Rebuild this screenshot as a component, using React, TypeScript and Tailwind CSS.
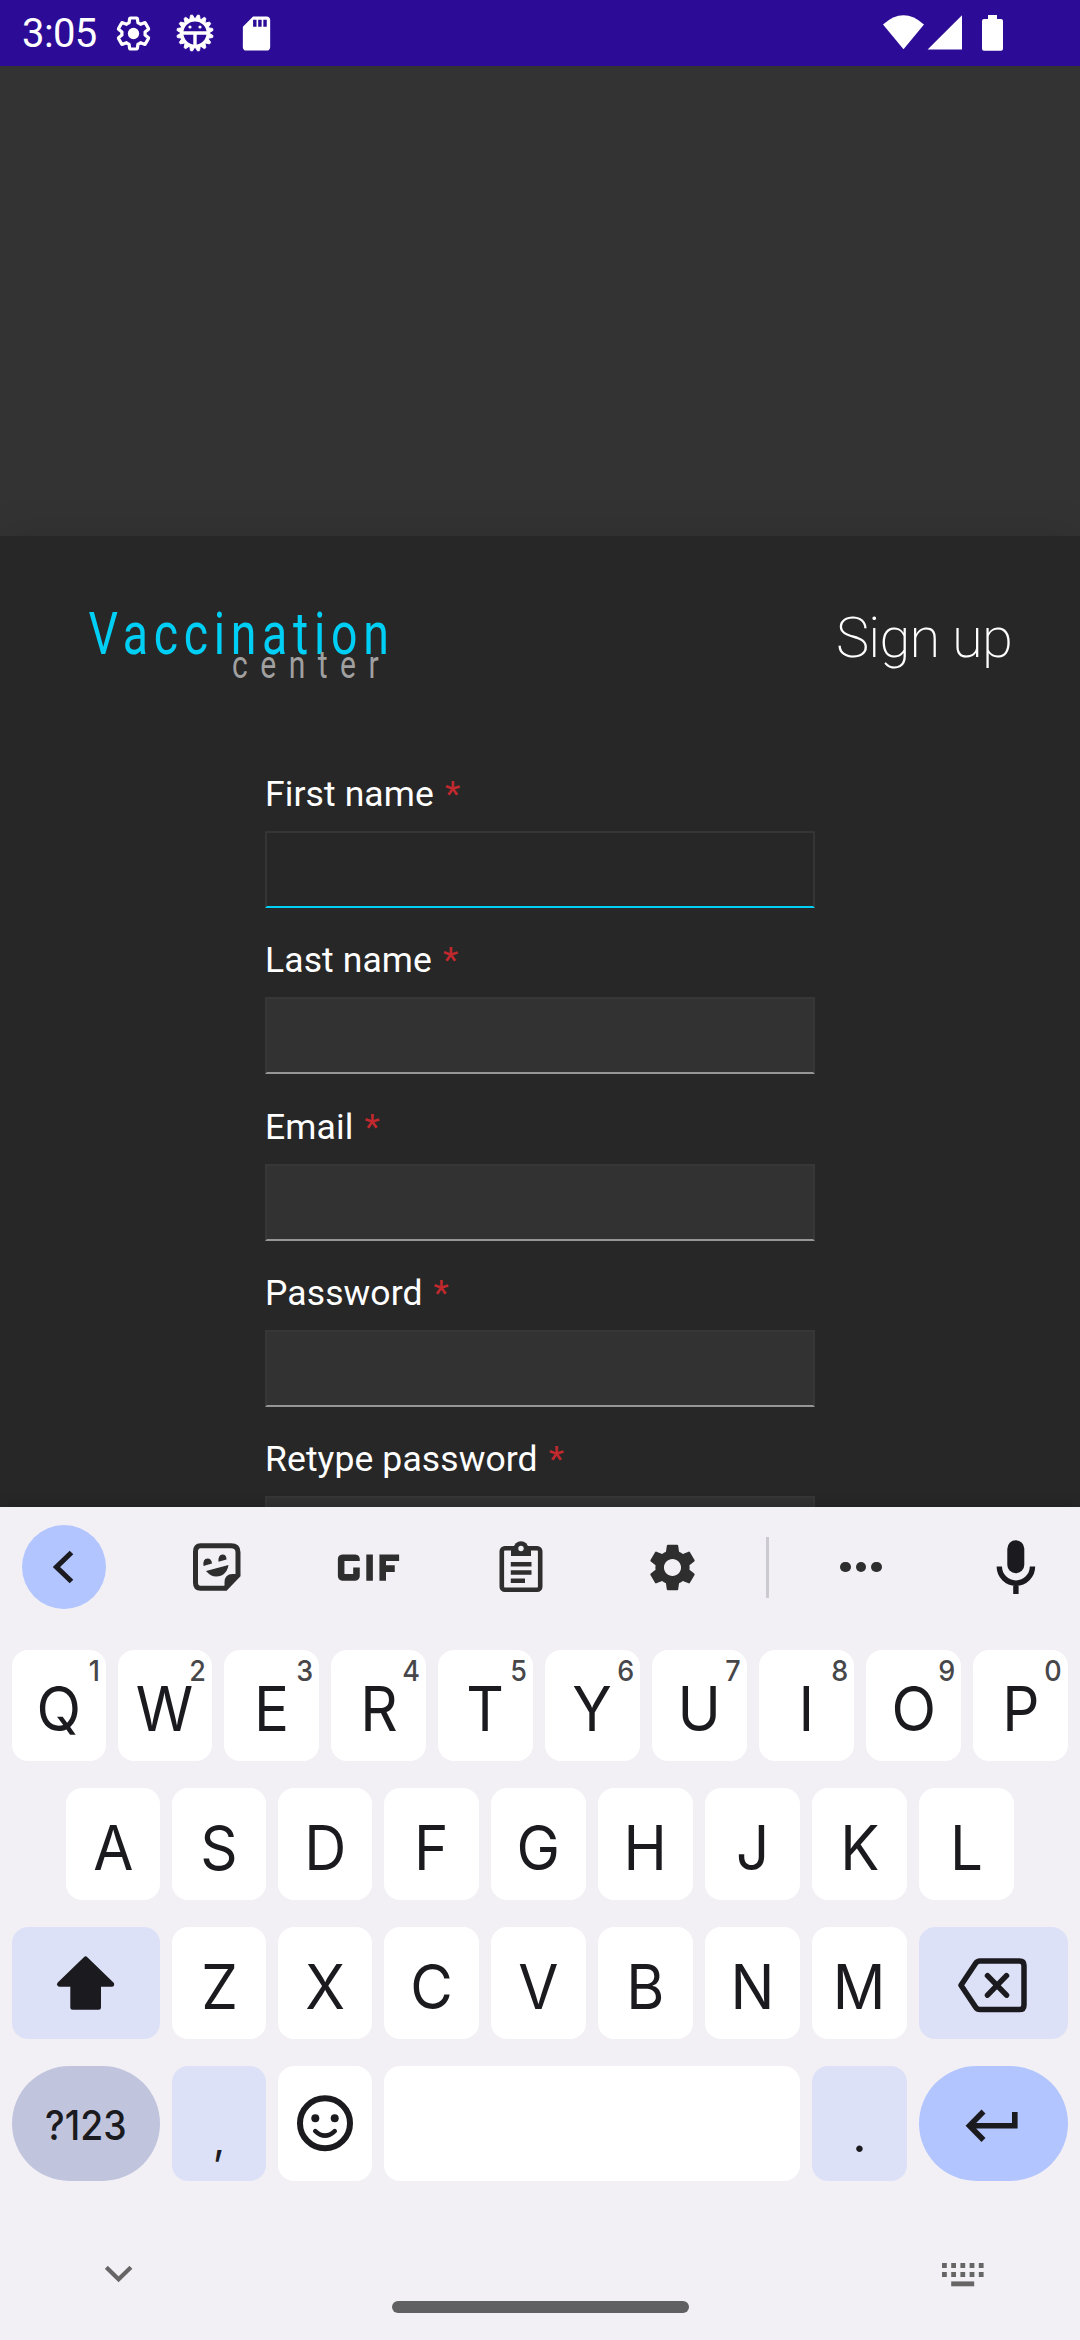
import type { ReactNode } from "react";
import { MdGif, MdSdCard, MdSettings } from "react-icons/md";

const GEAR =
  "M19.14 12.94c.04-.3.06-.61.06-.94 0-.32-.02-.64-.07-.94l2.03-1.58c.18-.14.23-.41.12-.61l-1.92-3.32c-.12-.22-.37-.29-.59-.22l-2.39.96c-.5-.38-1.03-.7-1.62-.94l-.36-2.54c-.04-.24-.24-.41-.48-.41h-3.84c-.24 0-.43.17-.47.41l-.36 2.54c-.59.24-1.13.57-1.62.94l-2.39-.96c-.22-.08-.47 0-.59.22L2.74 8.87c-.12.21-.08.47.12.61l2.03 1.58c-.05.3-.09.63-.09.94s.02.64.07.94l-2.03 1.58c-.18.14-.23.41-.12.61l1.92 3.32c.12.22.37.29.59.22l2.39-.96c.5.38 1.03.7 1.62.94l.36 2.54c.05.24.24.41.48.41h3.84c.24 0 .44-.17.47-.41l.36-2.54c.59-.24 1.13-.56 1.62-.94l2.39.96c.22.08.47 0 .59-.22l1.92-3.32c.12-.22.07-.47-.12-.61l-2.01-1.58z";

function BugGear() {
  return (
    <svg width="40" height="40" viewBox="-20 -20 40 40" fill="none" stroke="white">
      {Array.from({ length: 16 }, (_, i) => (
        <path key={i} d="M-2.6 -14L-1 -18.2H1L2.6 -14Z" fill="white" strokeWidth="0.8" strokeLinejoin="round" transform={`rotate(${i * 22.5 + 11.25})`} />
      ))}
      <circle r="13.2" strokeWidth="3.2" />
      <path d="M-12.5 0H12.5M0 0V13" strokeWidth="3.4" />
      <circle cx="-5" cy="-6" r="1.6" fill="white" stroke="none" />
      <circle cx="5" cy="-6" r="1.6" fill="white" stroke="none" />
    </svg>
  );
}

function StatusBar() {
  return (
    <header className="flex h-[66px] shrink-0 items-start bg-[#2c0b97] text-white">
      <span className="ml-[22px] w-[89px] pt-[10px] font-[Roboto] text-[40px] leading-[48px] tracking-[-0.6px]">3:05</span>
      <svg className="mt-[13px] ml-[2px]" width="41" height="41" viewBox="-0.7 -0.7 25.4 25.4" fill="none" stroke="white" strokeWidth="2" strokeLinejoin="round">
        <path d={GEAR} />
        <circle cx="12" cy="12" r="3.5" fill="white" stroke="none" />
      </svg>
      <div className="mt-[13px] ml-[20.5px]">
        <BugGear />
      </div>
      <MdSdCard className="mt-[13px] ml-[21px]" size={41} />
      <svg className="mt-[15px] ml-auto mr-[77px]" width="120" height="36" viewBox="883 15 120 36" fill="white">
        <path d="M883 24.5Q903.5 6 924 24.5L903.5 49.3Z" />
        <path d="M962 15.3V49.6H927.6Z" />
        <path d="M988 15h9v4h4q2 0 2 2v27.700q0 2 -2 2h-17q-2 0 -2-2V21q0-2 2-2h4z" />
      </svg>
    </header>
  );
}

function Logo() {
  return (
    <svg width="320" height="90" viewBox="80 600 320 90" fontFamily="Roboto, sans-serif">
      <text transform="translate(88.500 654) scale(0.78 1)" fontSize="59.500" textLength="385" fill="#00cff5">Vaccination</text>
      <text transform="translate(232 678) scale(0.78 1)" fontSize="38.500" textLength="188" fill="#a0a0a0">center</text>
    </svg>
  );
}

function Field({ label, focused }: { label: string; focused?: boolean }) {
  return (
    <label className="flex h-[166.250px] w-[550px] shrink-0 flex-col">
      <span className="flex h-[66px] items-start gap-[11px] pt-[8px] text-[35.500px] leading-[42px] tracking-[0.100px] whitespace-nowrap text-white">
        {label}
        <span className="text-[#c2292e]">*</span>
      </span>
      <span
        className={
          focused
            ? "h-[77px] border-2 border-[#353535] border-b-[#00cff5]"
            : "h-[77px] border-2 border-[#373737] border-b-[#969696] bg-[#323232]"
        }
      />
    </label>
  );
}

function Key({ children, hint, className = "w-[95px] bg-white" }: { children?: ReactNode; hint?: string; className?: string }) {
  return (
    <div className={`relative flex h-full shrink-0 items-center justify-center rounded-[16px] ${className}`}>
      {children}
      {hint && (
        <span className="absolute top-[3px] right-[6px] origin-right scale-x-[0.93] text-[29px] leading-[36px] font-medium text-[#47474a]">{hint}</span>
      )}
    </div>
  );
}

function Letters({ keys, hints, narrow }: { keys: string; hints?: string; narrow: number }) {
  return keys.split("").map((k, i) => (
    <Key key={k} hint={hints?.[i]} className={i < narrow ? "w-[94px] bg-white" : "w-[95px] bg-white"}>
      <span className="mt-[6px] scale-x-[0.94] text-[62px] leading-[75px]">{k}</span>
    </Key>
  ));
}

function Toolbar() {
  const slot = "flex w-[152px] shrink-0 items-center justify-center";
  return (
    <div className="flex h-[120px] shrink-0 items-center pl-[22px] text-[#2e2e2e]">
      <div className="mr-[34.500px] flex size-[84px] shrink-0 items-center justify-center rounded-full bg-[#b2c5ff]">
        <svg width="84" height="84" viewBox="22 1525 84 84" fill="none" stroke="#1b1b1f" strokeWidth="5.200">
          <path d="M71.500 1552.500L56.500 1567L71.500 1581.500" />
        </svg>
      </div>
      <div className={slot}>
        <svg width="48" height="48" viewBox="192.500 1543.500 48 48" fill="currentColor">
          <path d="M200 1546.300h30.500q7 0 7 6.500v23l-12.500 13h-25q-5 0-5-5.500v-31q0-6 5-6z" fill="none" stroke="currentColor" strokeWidth="5" />
          <path d="M224 1591v-8q0-8.500 8-8.500h8z" />
          <path d="M205.500 1571.500L228 1565.500Q227 1573 221 1576Q212 1579.500 205.500 1571.500z" />
          <path d="M203 1566.500q-1-7 4-7.400q4 0 4.500 5z" />
          <path d="M218 1562.200q-.5-7 4-7.200q4 0 4 5z" />
        </svg>
      </div>
      <div className={slot}>
        <MdGif size={105} />
      </div>
      <div className={slot}>
        <svg width="44" height="52" viewBox="498.500 1542 44 52" fill="currentColor">
          <rect x="501.300" y="1549.300" width="38.400" height="41.400" rx="3" fill="none" stroke="currentColor" strokeWidth="4.600" />
          <path d="M510.500 1548h20v9h-20z" />
          <circle cx="520.500" cy="1549.500" r="7.300" />
          <circle cx="520.500" cy="1549.500" r="2.700" fill="#f2f0f5" />
          <path d="M510.300 1563h20.700v4.500h-20.700zM510.300 1571.200h20.700v4.500h-20.700zM510.300 1579.400h14.200v4.500h-14.200z" />
        </svg>
      </div>
      <div className={slot}>
        <MdSettings size={57} />
      </div>
      <div className="ml-[17.500px] h-[61px] w-[3px] shrink-0 bg-[#cbcad0]" />
      <div className="flex w-[184px] shrink-0 justify-center gap-[5px]">
        <i className="size-[10.400px] rounded-full bg-current" />
        <i className="size-[10.400px] rounded-full bg-current" />
        <i className="size-[10.400px] rounded-full bg-current" />
      </div>
      <div className="flex w-[126px] shrink-0 justify-center">
        <svg width="40" height="54" viewBox="996 1540 40 54" fill="#1b1b1f">
          <rect x="1007.300" y="1540.300" width="17" height="33" rx="8.500" />
          <path d="M999.300 1566.500A16.600 16.600 0 0 0 1032.500 1566.500M1015.900 1583V1594" fill="none" stroke="#1b1b1f" strokeWidth="5.400" />
        </svg>
      </div>
    </div>
  );
}

function Keyboard() {
  return (
    <section className="relative flex h-[833px] shrink-0 flex-col bg-[#f2f0f5] font-[Inter] text-[#1b1b1f] shadow-[0_0_14px_rgba(0,0,0,0.25)]">
      <Toolbar />
      <div className="mt-[23px] flex h-[111px] shrink-0 gap-[12px] pl-[12px]">
        <Letters keys="QWERTYUIOP" hints="1234567890" narrow={2} />
      </div>
      <div className="mt-[27px] flex h-[112px] shrink-0 gap-[12px] pl-[66px]">
        <Letters keys="ASDFGHJKL" narrow={3} />
      </div>
      <div className="mt-[27px] flex h-[112px] shrink-0 gap-[12px] pl-[12px]">
        <Key className="w-[148px] bg-[#dde1f8]">
          <svg width="148" height="112" viewBox="12 1927 148 112" fill="#1b1b1f" stroke="#1b1b1f" strokeWidth="5" strokeLinejoin="round">
            <path d="M85.600 1959L59.500 1984.300H72.800V2007.300H98.500V1984.300H111.700Z" />
          </svg>
        </Key>
        <Letters keys="ZXCVBNM" narrow={2} />
        <Key className="w-[149px] bg-[#dde1f8]">
          <svg width="149" height="112" viewBox="919 1927 149 112" fill="none" stroke="#1b1b1f" strokeWidth="5.500" strokeLinejoin="round" strokeLinecap="round">
            <path d="M961 1985.300L975.500 1963.500Q977.200 1961 980 1961H1019.500Q1024 1961 1024 1965.500V2005Q1024 2009.600 1019.500 2009.600H980Q977.200 2009.600 975.500 2007Z" />
            <path d="M987.500 1975.700L1006.500 1995.200M1006.500 1975.700L987.500 1995.200" />
          </svg>
        </Key>
      </div>
      <div className="mt-[27px] flex h-[115px] shrink-0 gap-[12px] pl-[12px]">
        <Key className="w-[148px] !rounded-full bg-[#c0c5dd]">
          <span className="mt-[3px] scale-x-[0.91] text-[41px] leading-[50px] font-medium">?123</span>
        </Key>
        <Key className="w-[94px] bg-[#dde1f8]">
          <span className="mt-[30px] text-[42px] leading-[50px]">,</span>
        </Key>
        <Key className="w-[94px] bg-white">
          <svg width="60" height="60" viewBox="-30 -29.300 60 60" fill="none" stroke="#1b1b1f" strokeWidth="6">
            <circle r="25" />
            <path d="M-9.700 7.800Q0 17 9.700 7.800" strokeWidth="4.600" strokeLinecap="round" />
            <circle cx="-9.700" cy="-5" r="4" fill="#1b1b1f" stroke="none" />
            <circle cx="9.700" cy="-5" r="4" fill="#1b1b1f" stroke="none" />
          </svg>
        </Key>
        <Key className="w-[416px] bg-white" />
        <Key className="w-[95px] bg-[#dde1f8]">
          <span className="mt-[21px] text-[50px] leading-[60px]">.</span>
        </Key>
        <Key className="w-[149px] !rounded-full bg-[#b2c5ff]">
          <svg width="149" height="115" viewBox="919 2066 149 115" fill="none" stroke="#1b1b1f" strokeWidth="5.600">
            <path d="M983.500 2111.500L969.500 2125.700L983.500 2140M970 2125.700H1014.800V2112" />
          </svg>
        </Key>
      </div>
      <div className="mt-[82px] flex h-[24px] shrink-0 items-start justify-between pr-[96px] pl-[105px]">
        <svg className="mt-[3px]" width="28" height="17" viewBox="105 2266 28 17" fill="none" stroke="#666" strokeWidth="4.200">
          <path d="M106.300 2267.300L118.600 2279.300L130.900 2267.300" />
        </svg>
        <svg width="42" height="24" viewBox="0 0 42 24" fill="#666">
          {[0, 9.2, 18.4, 27.6, 36.8].map((x) => (
            <path key={x} d={`M${x} 0h4.800v5h-4.800zM${x} 9h4.800v5h-4.800z`} />
          ))}
          <path d="M9.200 18.400h23v4.900h-23z" />
        </svg>
      </div>
      <div className="mt-[14px] h-[12px] w-[297px] shrink-0 self-center rounded-full bg-[#606062]" />
    </section>
  );
}

export default function App() {
  return (
    <main className="flex h-[2340px] w-[1080px] flex-col overflow-hidden bg-[#333333]">
      <StatusBar />
      <div className="h-[470px] shrink-0" />
      <section className="flex h-[971px] shrink-0 flex-col overflow-hidden bg-[#272727] font-[Roboto] shadow-[0_0_40px_rgba(0,0,0,0.12)]">
        <div className="flex shrink-0 items-start justify-between pt-[64px] pr-[68px] pl-[80px]">
          <Logo />
          <h1 className="mt-[5px] text-[56px] leading-[66px] font-extralight tracking-[-0.8px] text-white">Sign up</h1>
        </div>
        <form className="mt-[75px] flex flex-col items-center">
          <Field label="First name" focused />
          <Field label="Last name" />
          <Field label="Email" />
          <Field label="Password" />
          <Field label="Retype password" />
        </form>
      </section>
      <Keyboard />
    </main>
  );
}
